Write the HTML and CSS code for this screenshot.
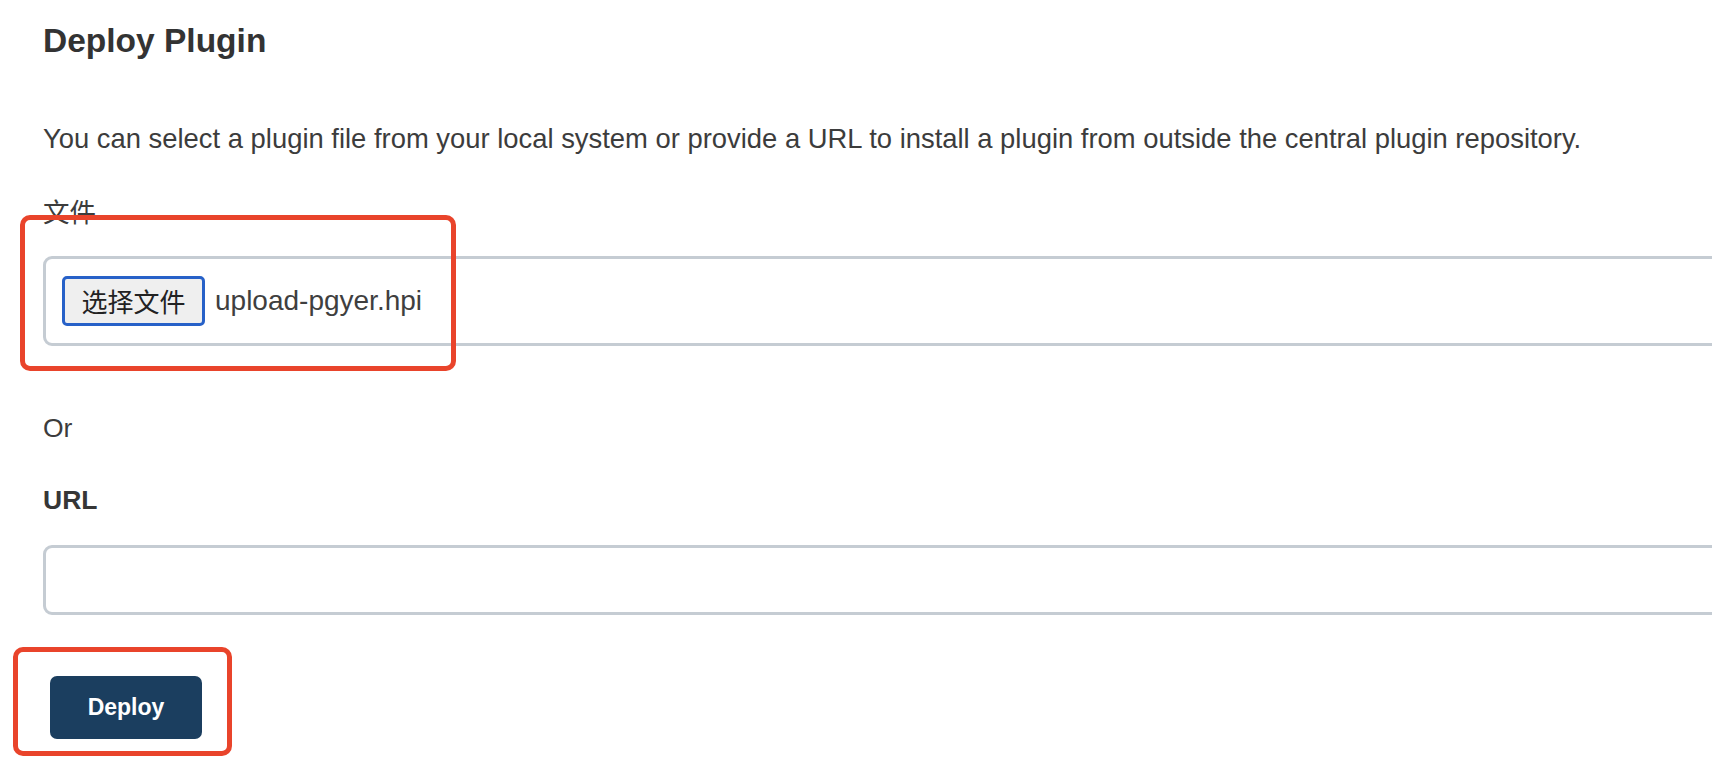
FILE: index.html
```html
<!DOCTYPE html>
<html lang="en">
<head>
<meta charset="utf-8">
<title>Deploy Plugin</title>
<link rel="stylesheet" href="styles.css">
</head>
<body>
<div class="page">
  <h1 class="title">Deploy Plugin</h1>
  <p class="desc">You can select a plugin file from your local system or provide a URL to install a plugin from outside the central plugin repository.</p>
  <div class="label label-cjk">文件</div>
  <div class="field field-file">
    <span class="file-btn">选择文件</span>
    <span class="file-name">upload-pgyer.hpi</span>
  </div>
  <div class="label or">Or</div>
  <div class="label label-bold">URL</div>
  <div class="field field-url"></div>
  <button class="deploy" type="button">Deploy</button>
  <div class="mark mark-file"></div>
  <div class="mark mark-deploy"></div>
</div>
</body>
</html>
```
FILE: styles.css
```css
html, body {
  margin: 0;
  padding: 0;
  background: #ffffff;
  overflow: hidden;
}
.page {
  position: relative;
  padding: 21px 0 0 43px;
  height: 739px;
  font-family: "Liberation Sans", Arial, "Noto Sans CJK SC", sans-serif;
  font-size: 26.5px;
  line-height: 32px;
  color: #3c3c3c;
}
.title {
  margin: 0 0 62px;
  font-size: 33.5px;
  line-height: 40px;
  font-weight: 700;
  color: #333333;
}
.desc {
  margin: 0 0 42px;
  font-size: 27.4px;
  white-space: nowrap;
}
.label {
  margin: 0;
}
.label-cjk {
  font-family: "Liberation Sans", "Noto Sans CJK SC", sans-serif;
}
.label-bold {
  font-weight: 700;
  color: #363636;
  margin-top: 40px;
}
.or {
  margin-top: 66px;
}
.field {
  box-sizing: border-box;
  width: 1720px;
  border: 3px solid #c5ccd3;
  border-radius: 9px;
  background: #ffffff;
}
.field-file {
  margin-top: 27px;
  height: 90px;
  display: flex;
  align-items: center;
  padding-left: 16px;
}
.file-btn {
  box-sizing: border-box;
  height: 50px;
  width: 143px;
  display: flex;
  align-items: center;
  justify-content: center;
  border: 3px solid #2761c8;
  border-radius: 5px;
  background: #efefef;
  font-family: "Noto Sans CJK SC", sans-serif;
  font-size: 26px;
  color: #222222;
}
.file-name {
  margin-left: 10px;
  font-size: 28px;
  color: #3f3f3f;
}
.field-url {
  margin-top: 29px;
  height: 70px;
}
.deploy {
  display: block;
  margin: 61px 0 0 7px;
  width: 152px;
  height: 63px;
  border: none;
  border-radius: 7px;
  background: #1b3e5f;
  color: #ffffff;
  font-family: "Liberation Sans", Arial, sans-serif;
  font-size: 23px;
  font-weight: 700;
  padding: 0;
}
.mark {
  position: absolute;
  box-sizing: border-box;
  border: 5px solid #e9442b;
  border-radius: 10px;
}
.mark-file {
  left: 20px;
  top: 215px;
  width: 436px;
  height: 156px;
}
.mark-deploy {
  left: 13px;
  top: 647px;
  width: 219px;
  height: 109px;
}
```
